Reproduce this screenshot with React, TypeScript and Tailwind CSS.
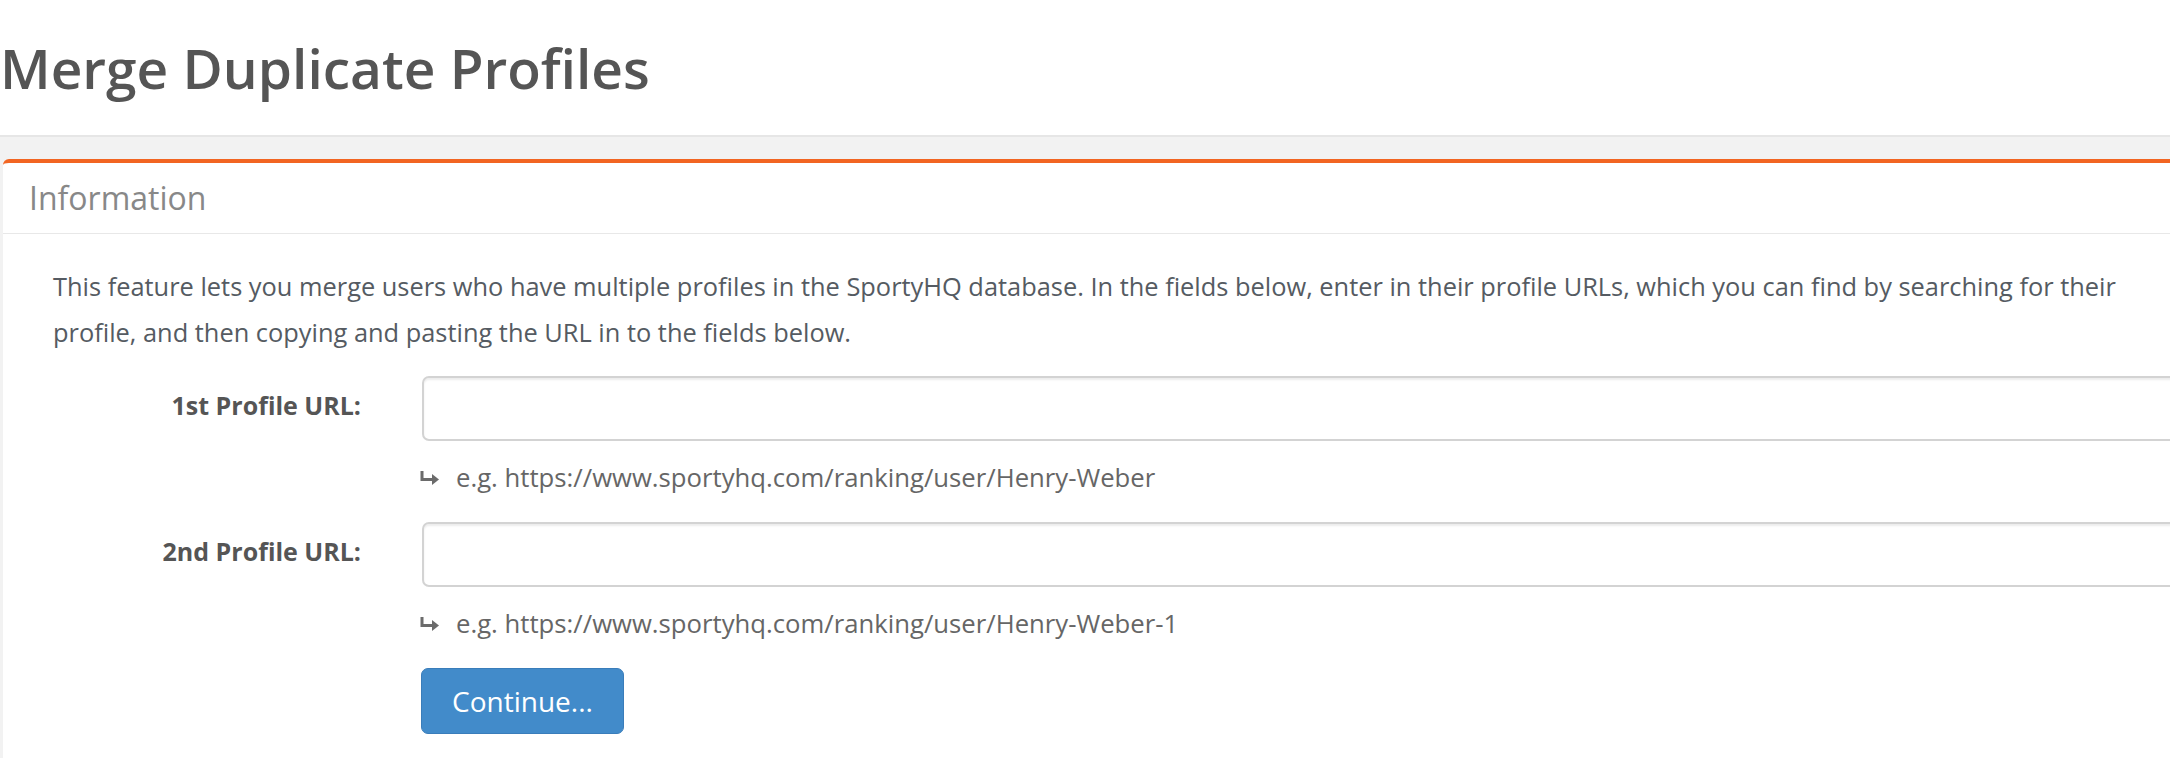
import React from 'react'

const HintArrow = () => (
    <svg width="20" height="16" viewBox="0 0 20 16" className="shrink-0 text-[#6b6b6b]">
        <path d="M2 1 V9.5 H13" fill="none" stroke="currentColor" strokeWidth="3" />
        <path d="M12 4 L19 9.5 L12 15 Z" fill="currentColor" />
    </svg>
)

interface FieldProps {
    label: string;
    example: string;
}

const ProfileField = ({ label, example }: FieldProps) => {
    return (
        <div className="mb-[26px]">
            <div className="flex items-center">
                <label className="w-[308px] shrink-0 pb-[6px] text-right text-[25px] font-bold text-[#555]">
                    {label}
                </label>
                <input
                    type="text"
                    className="ml-[61px] h-[65px] flex-1 rounded-[7px] border-2 border-[#d3d3d3] bg-white shadow-[inset_0_2px_2px_rgba(0,0,0,0.075)] outline-none"
                />
            </div>
            <div className="mt-[19px] ml-[367px] flex items-center gap-[16px] text-[25.7px] leading-[36px] text-[#666]">
                <HintArrow />
                <span>{example}</span>
            </div>
        </div>
    )
}

const App = () => {
    return (
        <div className="h-[758px] w-[2170px] overflow-hidden bg-white" style={{ fontFamily: '"Open Sans", sans-serif' }}>
            <div className="w-[2250px]">
                <h1 className="pt-[38px] text-[55px] font-semibold leading-[60px] text-[#555]">
                    Merge Duplicate Profiles
                </h1>

                <div className="mt-[37px] border-t-2 border-[#e6e6e6] bg-[#f2f2f2] pt-[22px] pl-[3px]">
                    <div className="rounded-tl-[6px] border-t-4 border-[#f26522] bg-white">
                        <div className="flex h-[71px] items-center border-b border-[#e8e8e8] pl-[26px] text-[32px] text-[#888]">
                            Information
                        </div>

                        <div className="pt-[29px] pl-[50px] pb-[40px]">
                            <p className="max-w-[2100px] text-[25.4px] leading-[46px] text-[#555b62]">
                                This feature lets you merge users who have multiple profiles in the SportyHQ database. In the fields below, enter in their profile URLs, which you can find by searching for their profile, and then copying and pasting the URL in to the fields below.
                            </p>

                            <div className="mt-[21px]">
                                <ProfileField
                                    label="1st Profile URL:"
                                    example="e.g. https://www.sportyhq.com/ranking/user/Henry-Weber"
                                />
                                <ProfileField
                                    label="2nd Profile URL:"
                                    example="e.g. https://www.sportyhq.com/ranking/user/Henry-Weber-1"
                                />
                            </div>

                            <div className="ml-[368px]">
                                <button className="h-[66px] w-[203px] rounded-[7px] border border-[#3a7dba] bg-[#428bca] text-[28px] text-white">
                                    Continue...
                                </button>
                            </div>
                        </div>
                    </div>
                </div>
            </div>
        </div>
    )
}

export default App
